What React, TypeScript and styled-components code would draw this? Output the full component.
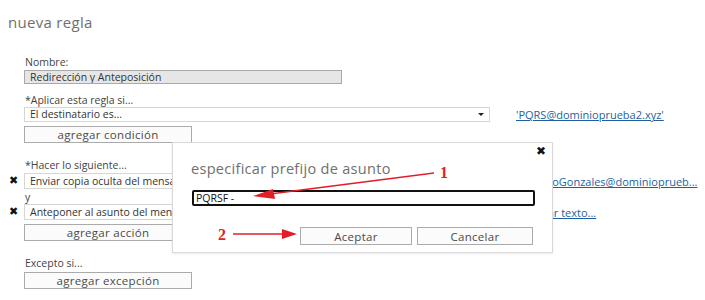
import { createGlobalStyle, styled } from "styled-components"

const GlobalStyle = createGlobalStyle`
    html, body {
        margin: 0;
        padding: 0;
        background: #ffffff;
    }

    body {
        font-family: "Open Sans", "Noto Sans", sans-serif;
        color: #333333;
    }
`

const Page = styled.div`
    position: relative;
    width: 705px;
    height: 300px;
    overflow: hidden;
    background: white;
`

const Title = styled.h1`
    margin: 0;
    padding: 12px 0 0 8px;
    font-size: 15px;
    line-height: 20px;
    font-weight: 400;
    color: #6f6f6f;
    letter-spacing: 0.3px;
`

const Form = styled.div`
    display: flex;
    flex-direction: column;
    padding-top: 24px;
`

const Label = styled.div<{ $top?: number }>`
    margin: ${(p) => p.$top ?? 0}px 0 0 25px;
    height: 12px;
    font-size: 10.5px;
    line-height: 12px;
    color: #444444;
`

const Row = styled.div<{ $top?: number }>`
    display: flex;
    align-items: center;
    margin-top: ${(p) => p.$top ?? 0}px;
`

const Remove = styled.span`
    width: 24px;
    flex: none;
    text-align: center;
    padding-left: 3px;
    box-sizing: border-box;
    font-size: 11px;
    line-height: 12px;
    font-weight: 700;
    color: #111;
    font-family: "DejaVu Sans", sans-serif;
`

const Field = styled.div<{ $width: number; $height: number; $grey?: boolean }>`
    box-sizing: border-box;
    position: relative;
    width: ${(p) => p.$width}px;
    height: ${(p) => p.$height}px;
    border: 1px solid ${(p) => (p.$grey ? "#a9a9a9" : "#d6d6d6")};
    background: ${(p) => (p.$grey ? "#e6e6e6" : "#ffffff")};
    padding-left: 5px;
    font-size: 10.5px;
    line-height: ${(p) => p.$height - 2}px;
    color: #333;
    white-space: nowrap;
    overflow: hidden;
`

const Caret = styled.span`
    position: absolute;
    right: 5px;
    top: 5px;
    width: 0;
    height: 0;
    border-left: 3px solid transparent;
    border-right: 3px solid transparent;
    border-top: 3px solid #222;
`

const Link = styled.a`
    margin-left: 26px;
    font-size: 11px;
    color: #1f5f9e;
    text-decoration: underline;
    white-space: nowrap;
`

const Button = styled.button<{ $width: number; $height: number }>`
    display: block;
    box-sizing: border-box;
    width: ${(p) => p.$width}px;
    height: ${(p) => p.$height}px;
    padding: 0;
    border: 1px solid #ababab;
    background: #fbfbfb;
    font-family: inherit;
    font-size: 11.5px;
    color: #4a4a4a;
    letter-spacing: 0.3px;
`

const Indent = styled.div<{ $top?: number }>`
    padding-left: 24px;
    margin-top: ${(p) => p.$top ?? 0}px;
`

const Dialog = styled.div`
    position: absolute;
    left: 172px;
    top: 142px;
    width: 381px;
    height: 111px;
    box-sizing: border-box;
    background: white;
    border: 1px solid #d9d9d9;
    box-shadow: 0 1px 2px rgba(0, 0, 0, 0.08);
    padding: 16px 19px 0 18px;
    display: flex;
    flex-direction: column;
`

const Close = styled.span`
    position: absolute;
    right: 6px;
    top: 1px;
    font-size: 12px;
    font-weight: 700;
    color: #111;
    font-family: "DejaVu Sans", sans-serif;
`

const DialogTitle = styled.div`
    font-size: 14.5px;
    line-height: 20px;
    color: #6f6f6f;
    letter-spacing: 0.3px;
`

const PrefixInput = styled.div`
    box-sizing: border-box;
    margin: 11px 0 0 1px;
    width: 343px;
    height: 16px;
    border: 2px solid #111;
    border-radius: 2px;
    padding-left: 2px;
    font-size: 10.5px;
    line-height: 12px;
    color: #111;
`

const Actions = styled.div`
    display: flex;
    justify-content: flex-end;
    gap: 5px;
    margin-top: 21px;
`

const Overlay = styled.svg`
    position: absolute;
    left: 0;
    top: 0;
    pointer-events: none;
`

const Marker = styled.text`
    font-family: "Liberation Serif", serif;
    font-weight: 700;
    font-size: 16px;
    fill: #e41e26;
`

export default function App() {
    return (
        <Page>
            <GlobalStyle />
            <Title>nueva regla</Title>

            <Form>
                <Label>Nombre:</Label>
                <Row $top={2}>
                    <Remove />
                    <Field $width={318} $height={14} $grey>Redirección y Anteposición</Field>
                </Row>

                <Label $top={10}>*Aplicar esta regla si...</Label>
                <Row $top={1}>
                    <Remove />
                    <Field $width={466} $height={15}>
                        El destinatario es...
                        <Caret />
                    </Field>
                    <Link>'PQRS@dominioprueba2.xyz'</Link>
                </Row>
                <Indent $top={4}>
                    <Button $width={168} $height={17}>agregar condición</Button>
                </Indent>

                <Label $top={16}>*Hacer lo siguiente...</Label>
                <Row $top={2}>
                    <Remove>✖</Remove>
                    <Field $width={466} $height={16}>Enviar copia oculta del mensaje a...</Field>
                    <Link>'AntonioGonzales@dominioprueb...</Link>
                </Row>
                <Label $top={2}>y</Label>
                <Row $top={1}>
                    <Remove>✖</Remove>
                    <Field $width={466} $height={16}>Anteponer al asunto del mensaje...</Field>
                    <Link>Ingresar texto...</Link>
                </Row>
                <Indent $top={4}>
                    <Button $width={168} $height={17}>agregar acción</Button>
                </Indent>

                <Label $top={16}>Excepto si...</Label>
                <Indent $top={3}>
                    <Button $width={168} $height={17}>agregar excepción</Button>
                </Indent>
            </Form>

            <Dialog>
                <Close>✖</Close>
                <DialogTitle>especificar prefijo de asunto</DialogTitle>
                <PrefixInput>PQRSF -</PrefixInput>
                <Actions>
                    <Button $width={112} $height={18}>Aceptar</Button>
                    <Button $width={116} $height={18}>Cancelar</Button>
                </Actions>
            </Dialog>

            <Overlay width={705} height={300}>
                <line x1={434} y1={173} x2={270} y2={194} stroke="#e41e26" strokeWidth={1.5} />
                <polygon points="253,196 273,189 275,199" fill="#e41e26" />
                <Marker x={440} y={178}>1</Marker>
                <line x1={233} y1={234} x2={283} y2={234} stroke="#e41e26" strokeWidth={1.5} />
                <polygon points="297,234 282,229 282,239" fill="#e41e26" />
                <Marker x={218} y={240}>2</Marker>
            </Overlay>
        </Page>
    )
}
